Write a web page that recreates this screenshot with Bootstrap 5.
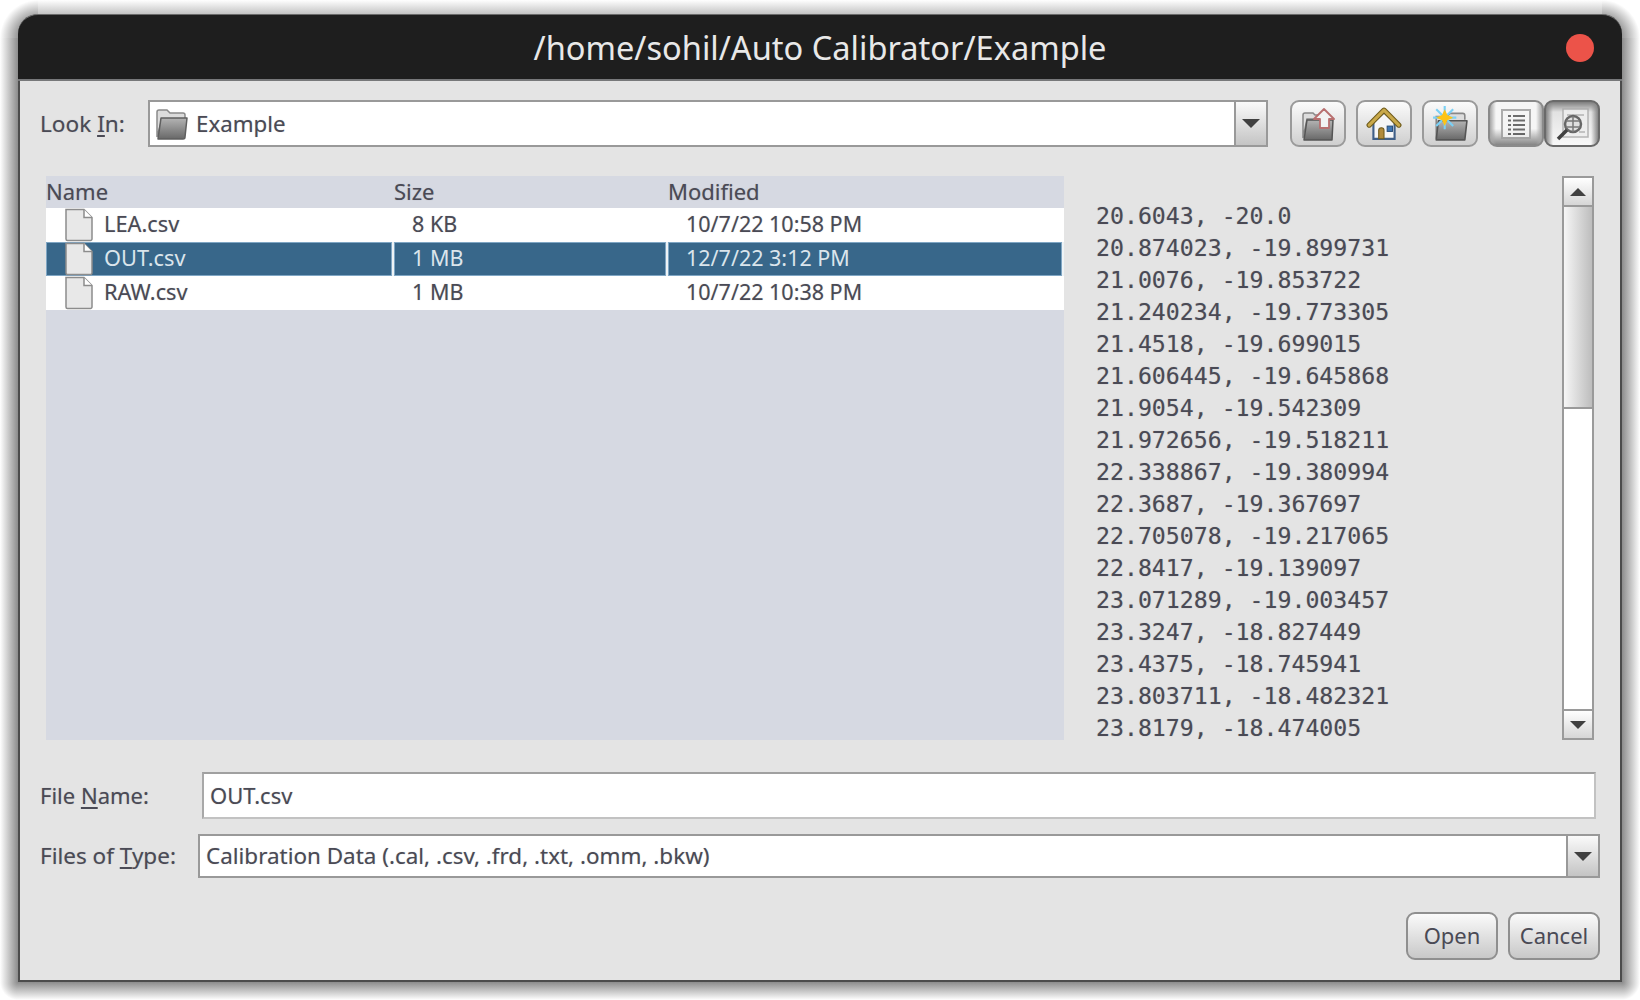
<!DOCTYPE html>
<html lang="en">
<head>
  <meta charset="UTF-8">
  <title>Open File</title>
  <link href="https://cdn.jsdelivr.net/npm/bootstrap@5.3.2/dist/css/bootstrap.min.css" rel="stylesheet">
  <style>
    body {
      background-color: #ffffff;
      font-family: "Noto Sans", "Open Sans", sans-serif;
      font-size: 22px;
      color: #4a4a55;
      overflow: hidden;
    }
    /* soft shadow round the window, drawn as gradient strips and corners */
    .dlg-backdrop {
      width: 1640px;
      height: 1000px;
      padding: 14px 18px 18px 18px;
      background-image:
        radial-gradient(circle at 100% 100%, #8c8c8c 0, #969696 20px, #ffffff 38px),
        radial-gradient(circle at 0 100%, #8c8c8c 0, #969696 20px, #ffffff 38px),
        radial-gradient(circle at 100% 0, #8c8c8c 0, #ffffff 18px),
        radial-gradient(circle at 0 0, #8c8c8c 0, #ffffff 18px),
        linear-gradient(90deg, #ffffff, #8c8c8c),
        linear-gradient(270deg, #ffffff, #8c8c8c),
        linear-gradient(0deg, #ffffff, #8c8c8c),
        linear-gradient(180deg, #ffffff, #c4c4c4);
      background-size: 38px 38px, 38px 38px, 18px 18px, 18px 18px, 18px 944px, 18px 944px, 1604px 18px, 1564px 14px;
      background-position: 0 0, 1602px 0, 0 982px, 1622px 982px, 0 38px, 1622px 38px, 18px 982px, 38px 0;
      background-repeat: no-repeat;
    }
    .dlg-window {
      width: 1604px;
      height: 968px;
      background-color: #e4e4e4;
      border: 2px solid #4c4c4c;
      border-top: 0;
      border-radius: 20px 20px 0 0;
      text-shadow: 0 0 1px rgba(74, 74, 85, 0.35);
    }
    .dlg-title {
      height: 67px;
      margin: 0 -2px;
      background-color: #1e1e1e;
      border-top: 1px solid #6a6a6a;
      border-bottom: 2px solid #77787a;
      border-radius: 20px 20px 0 0;
      color: #e8e8e8;
      font-size: 32.600px;
      line-height: 65px;
      text-align: center;
      text-shadow: none;
    }
    .dlg-close {
      position: absolute;
      top: 19px;
      right: 28px;
      width: 28px;
      height: 28px;
      border-radius: 50%;
      background-color: #ec5349;
    }
    .dlg-body {
      padding: 19px 20px 0 20px;
    }
    .look-row { height: 47px; }
    .look-label { width: 108px; font-size: 22.600px; }
    .field-label u { text-underline-offset: 3px; }
    .combo {
      background-color: #fff;
      border: 2px solid #999;
      height: 100%;
    }
    .combo-look { width: 1120px; }
    .combo-icon { margin-left: 6px; }
    .combo-text { padding-left: 8px; font-size: 22.300px; }
    .combo-arrow {
      width: 32px;
      height: 100%;
      margin-left: auto;
      border-left: 2px solid #999;
      background: linear-gradient(#fafafa, #c4c4c4);
    }
    .arrow-down {
      width: 0;
      height: 0;
      border-left: 9px solid transparent;
      border-right: 9px solid transparent;
      border-top: 9px solid #404040;
    }
    .arrow-up {
      width: 0;
      height: 0;
      border-left: 8px solid transparent;
      border-right: 8px solid transparent;
      border-bottom: 8px solid #404040;
    }
    .arrow-small {
      border-top-width: 8px;
      border-left-width: 8px;
      border-right-width: 8px;
    }
    .tool-group { margin-left: 22px; }
    .tool-btn {
      width: 56px;
      height: 47px;
      border: 2px solid #9a9a9a;
      border-radius: 9px;
      background: linear-gradient(#fbfbfb, #cfcfcf);
    }
    .tool-btn + .tool-btn { margin-left: 10px; }
    .tool-toggle {
      width: 56px;
      height: 47px;
      border: 2px solid #8a8a8a;
      border-radius: 9px;
      background:
        linear-gradient(90deg, #a6a6a6, rgba(166, 166, 166, 0) 6px, rgba(166, 166, 166, 0) calc(100% - 6px), #a6a6a6),
        linear-gradient(#f6f6f6 62%, #858585);
    }
    .tool-toggle-on {
      margin-left: 0;
      border-color: #6a6a6a;
      background:
        linear-gradient(90deg, #858585, rgba(133, 133, 133, 0) 7px, rgba(133, 133, 133, 0) calc(100% - 7px), #858585),
        linear-gradient(#7e7e7e, #e2e2e2 10px, #f8f8f8);
    }
    .tool-first { margin-left: 10px; }
    .icon-faded { opacity: 0.85; }

    .mid-row {
      height: 564px;
      margin-top: 29px;
    }
    .file-pane {
      width: 1018px;
      margin-left: 6px;
      background-color: #d6d9e2;
    }
    .file-table {
      table-layout: fixed;
      width: 1018px;
      border-collapse: separate;
      border-spacing: 0;
    }
    .file-table th {
      height: 32px;
      font-weight: 400;
      padding: 0 0 2px;
      line-height: 30px;
    }
    .file-table td {
      height: 34px;
      padding: 0;
      background-color: #fff;
      font-size: 21.500px;
      line-height: 32px;
      vertical-align: top;
      white-space: nowrap;
    }
    .file-table tr.picked td {
      background-color: #38678a;
      color: #dbe5ec;
      box-shadow: inset 0 0 0 1px #7fa6c4;
      border-right: 2px solid #eef3f6;
      text-shadow: none;
    }
    .cell-name { padding-left: 18px !important; }
    .cell-name .name-wrap { height: 34px; font-size: 21.800px; }
    .cell-name svg { margin-right: 10px; flex-shrink: 0; }
    .cell-size { padding-left: 18px !important; }
    .cell-mod { padding-left: 18px !important; }

    .preview-pane {
      width: 498px;
      margin-left: 0;
    }
    .preview-text {
      padding: 24px 0 0 32px;
      font-family: "DejaVu Sans Mono", monospace;
      font-size: 23.200px;
      line-height: 32px;
      color: #4a4a55;
      white-space: pre;
      overflow: hidden;
    }
    .scroll-track {
      width: 32px;
      height: 564px;
      border: 2px solid #9a9a9a;
      background-color: #fff;
    }
    .scroll-btn {
      height: 29px;
      background: linear-gradient(#ffffff, #d6d6d6);
    }
    .scroll-btn-up { border-bottom: 2px solid #9a9a9a; }
    .scroll-btn-down { border-top: 2px solid #9a9a9a; margin-top: auto; }
    .scroll-thumb {
      height: 202px;
      border-bottom: 2px solid #9a9a9a;
      background: linear-gradient(90deg, #f6f6f6, #bdbdbd);
    }

    .name-row { height: 47px; margin-top: 32px; }
    .name-label { width: 162px; }
    .name-input {
      width: 1394px;
      height: 47px;
      background-color: #fff;
      border: 2px solid #c2c2c2;
      border-top-color: #a0a0a0;
      border-left-color: #a8a8a8;
      padding-left: 6px;
      line-height: 42px;
    }
    .type-row { height: 44px; margin-top: 15px; }
    .type-label { width: 158px; font-size: 22.500px; }
    .type-combo { width: 1402px; }
    .type-text { padding-left: 6px; font-size: 22.450px; line-height: 38px; }

    .action-row { margin-top: 34px; }
    .dlg-action {
      width: 92px;
      height: 48px;
      border: 2px solid #8f8f8f;
      border-radius: 9px;
      background: linear-gradient(#fafafa, #c8c8c8);
      color: #4a4a55;
      font-size: 22px;
      padding: 0 0 2px;
      line-height: 40px;
    }
    .dlg-action + .dlg-action { margin-left: 10px; }
  </style>
</head>
<body>
  <svg width="0" height="0" class="position-absolute">
    <defs>
      <linearGradient id="folderFill" x1="0" y1="0" x2="0" y2="1">
        <stop offset="0" stop-color="#b4b4b4"/>
        <stop offset="1" stop-color="#686868"/>
      </linearGradient>
      <symbol id="fileIcon" viewBox="0 0 30 34">
        <path d="M2 1.500H20L28 9.500V31a1.500 1.500 0 0 1-1.500 1.500H3.500A1.500 1.500 0 0 1 2 31Z" fill="#e8e8e8" stroke="#8c8c8c" stroke-width="1.500"/>
        <path d="M20 1.500V9.500H28" fill="#fff" stroke="#8c8c8c" stroke-width="1.500"/>
      </symbol>
    </defs>
  </svg>

  <div class="dlg-backdrop">
  <div class="dlg-window d-flex flex-column">
    <div class="dlg-title position-relative">
      /home/sohil/Auto Calibrator/Example
      <span class="dlg-close"></span>
    </div>

    <div class="dlg-body flex-grow-1">
      <div class="look-row d-flex align-items-center">
        <div class="look-label field-label">Look <u>I</u>n:</div>
        <div class="combo combo-look d-flex align-items-center">
          <svg class="combo-icon" width="32" height="32" viewBox="0 0 32 32">
            <path d="M1 29V4a2 2 0 0 1 2-2h8l3 3h13a2 2 0 0 1 2 2v4H6Z" fill="#dcdcdc" stroke="#8a8a8a" stroke-width="1.500"/>
            <path d="M2 31 5 10h26l-2 19a2 2 0 0 1-2 2Z" fill="url(#folderFill)" stroke="#5f5f5f" stroke-width="1.500" stroke-linejoin="round"/>
          </svg>
          <span class="combo-text">Example</span>
          <div class="combo-arrow d-flex align-items-center justify-content-center">
            <span class="arrow-down"></span>
          </div>
        </div>

        <div class="tool-group d-flex">
          <button class="tool-btn d-flex align-items-center justify-content-center p-0" type="button" aria-label="Up one level">
            <svg width="34" height="34" viewBox="0 0 34 34">
              <path d="M2 31V8a2 2 0 0 1 2-2h8l2 2h4v4H6Z" fill="#ddd" stroke="#888" stroke-width="1.500"/>
              <path d="M3 33 6 13h26l-1 20Z" fill="url(#folderFill)" stroke="#555" stroke-width="1.500" stroke-linejoin="round"/>
              <path d="M23 2 33 12H28V21H19V12H13Z" fill="#f2f2f2" stroke="#b86f6f" stroke-width="1.800" stroke-linejoin="round"/>
            </svg>
          </button>
          <button class="tool-btn d-flex align-items-center justify-content-center p-0" type="button" aria-label="Home">
            <svg width="36" height="36" viewBox="0 0 34 34">
              <path d="M7 15V31H27V15L17 6Z" fill="#f6f6f6" stroke="#3f5f88" stroke-width="2"/>
              <path d="M3 18 17 4 31 18" fill="none" stroke="#6e5a1a" stroke-width="5" stroke-linejoin="round" stroke-linecap="round"/>
              <path d="M3 18 17 4 31 18" fill="none" stroke="#c9a94a" stroke-width="3" stroke-linejoin="round" stroke-linecap="round"/>
              <path d="M12 31V23a2.500 2.500 0 0 1 5 0V31Z" fill="#b08a3c" stroke="#6e5a1a"/>
              <rect x="20" y="19" width="5" height="5" fill="#3f78b5" stroke="#2b4f7a"/>
            </svg>
          </button>
          <button class="tool-btn d-flex align-items-center justify-content-center p-0" type="button" aria-label="New folder">
            <svg width="36" height="36" viewBox="0 0 34 34">
              <path d="M4 31V10h10l3-3h12a2 2 0 0 1 2 2v4" fill="#ddd" stroke="#888" stroke-width="1.500"/>
              <path d="M4 32 6 14h27l-2 18Z" fill="url(#folderFill)" stroke="#555" stroke-width="1.500" stroke-linejoin="round"/>
              <path d="M12 0V22M1 11H23M4 3 20 19M20 3 4 19" stroke="#79d0f6" stroke-width="2"/>
              <path d="M12 3 14.500 8.500 20 11 14.500 13.500 12 19 9.500 13.500 4 11 9.500 8.500Z" fill="#fdc314"/>
            </svg>
          </button>
          <button class="tool-toggle tool-first d-flex align-items-center justify-content-center p-0" type="button" aria-label="List">
            <svg class="icon-faded" width="32" height="32" viewBox="0 0 32 32">
              <rect x="2" y="2" width="28" height="28" fill="#f4f4f4" stroke="#a0a0a0" stroke-width="2"/>
              <path d="M8 8h3M13 8h12M8 12.500h3M13 12.500h12M8 17h3M13 17h12M8 21.500h3M13 21.500h12M8 26h3M13 26h12" stroke="#555" stroke-width="2.200"/>
            </svg>
          </button>
          <button class="tool-toggle tool-toggle-on d-flex align-items-center justify-content-center p-0" type="button" aria-label="Details">
            <svg class="icon-faded" width="34" height="34" viewBox="0 0 34 34">
              <rect x="8" y="2" width="25" height="28" fill="#eee" stroke="#aaa" stroke-width="1.500"/>
              <path d="M12 8H29M24 25H30" stroke="#aaa" stroke-width="1.500"/>
              <circle cx="18" cy="17" r="8" fill="#dedede" stroke="#505050" stroke-width="2.500"/>
              <path d="M11 14H25M11 20H25M18 9V25" stroke="#666" stroke-width="1.500"/>
              <path d="M12 23 3 32" stroke="#222" stroke-width="3.500"/>
            </svg>
          </button>
        </div>
      </div>

      <div class="mid-row d-flex">
        <div class="file-pane">
          <table class="file-table">
            <colgroup><col style="width: 348px"><col style="width: 274px"><col></colgroup>
            <thead>
              <tr><th>Name</th><th>Size</th><th>Modified</th></tr>
            </thead>
            <tbody>
              <tr>
                <td class="cell-name"><div class="name-wrap d-flex"><svg width="30" height="34"><use href="#fileIcon"/></svg><span>LEA.csv</span></div></td>
                <td class="cell-size">8 KB</td>
                <td class="cell-mod">10/7/22 10:58 PM</td>
              </tr>
              <tr class="picked">
                <td class="cell-name"><div class="name-wrap d-flex"><svg width="30" height="34"><use href="#fileIcon"/></svg><span>OUT.csv</span></div></td>
                <td class="cell-size">1 MB</td>
                <td class="cell-mod">12/7/22 3:12 PM</td>
              </tr>
              <tr>
                <td class="cell-name"><div class="name-wrap d-flex"><svg width="30" height="34"><use href="#fileIcon"/></svg><span>RAW.csv</span></div></td>
                <td class="cell-size">1 MB</td>
                <td class="cell-mod">10/7/22 10:38 PM</td>
              </tr>
            </tbody>
          </table>
        </div>

        <div class="preview-pane preview-text">20.6043, -20.0
20.874023, -19.899731
21.0076, -19.853722
21.240234, -19.773305
21.4518, -19.699015
21.606445, -19.645868
21.9054, -19.542309
21.972656, -19.518211
22.338867, -19.380994
22.3687, -19.367697
22.705078, -19.217065
22.8417, -19.139097
23.071289, -19.003457
23.3247, -18.827449
23.4375, -18.745941
23.803711, -18.482321
23.8179, -18.474005</div>

        <div class="scroll-track d-flex flex-column">
          <div class="scroll-btn scroll-btn-up d-flex align-items-center justify-content-center"><span class="arrow-up"></span></div>
          <div class="scroll-thumb"></div>
          <div class="scroll-btn scroll-btn-down d-flex align-items-center justify-content-center"><span class="arrow-down arrow-small"></span></div>
        </div>
      </div>

      <div class="name-row d-flex align-items-center">
        <div class="name-label field-label">File <u>N</u>ame:</div>
        <div class="name-input">OUT.csv</div>
      </div>

      <div class="type-row d-flex align-items-center">
        <div class="type-label field-label">Files of <u>T</u>ype:</div>
        <div class="combo type-combo d-flex align-items-center">
          <span class="type-text">Calibration Data (.cal, .csv, .frd, .txt, .omm, .bkw)</span>
          <div class="combo-arrow d-flex align-items-center justify-content-center">
            <span class="arrow-down"></span>
          </div>
        </div>
      </div>

      <div class="action-row d-flex justify-content-end">
        <button class="dlg-action" type="button">Open</button>
        <button class="dlg-action" type="button">Cancel</button>
      </div>
    </div>
  </div>
  </div>

  <script src="https://cdn.jsdelivr.net/npm/bootstrap@5.3.2/dist/js/bootstrap.bundle.min.js"></script>
</body>
</html>
